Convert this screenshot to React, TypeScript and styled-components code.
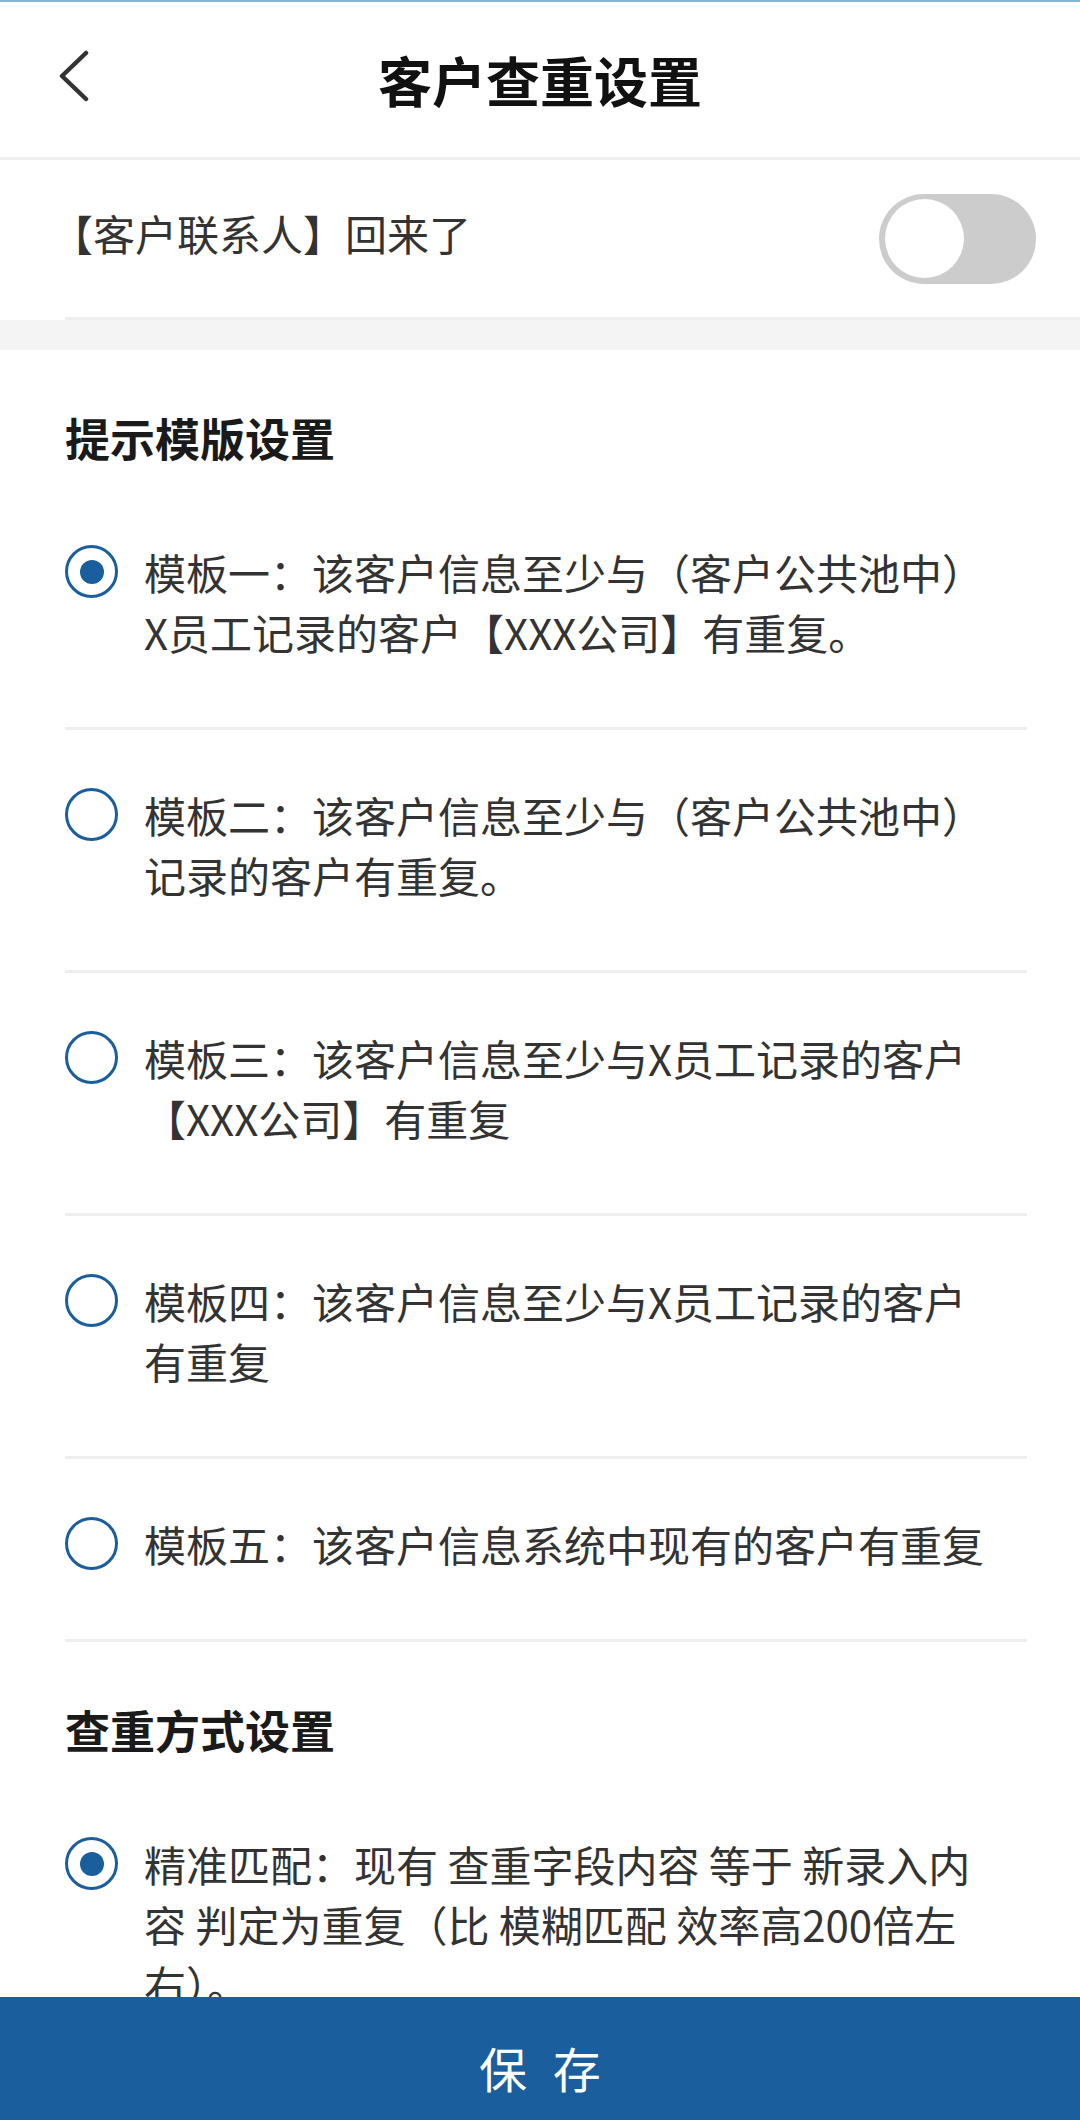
import React, { useState } from "react";
import styled, { createGlobalStyle } from "styled-components";

const GlobalStyle = createGlobalStyle`
  html, body {
    margin: 0;
    padding: 0;
    background: #ffffff;
  }
  body {
    font-family: "Noto Sans CJK SC", "Noto Sans", sans-serif;
    color: #333333;
  }
  *, *::before, *::after {
    box-sizing: border-box;
  }
`;

const Page = styled.div`
  height: 100vh;
  display: flex;
  flex-direction: column;
  overflow: hidden;
  background: #ffffff;
`;

const Header = styled.header`
  flex-shrink: 0;
  height: 160px;
  border-top: 2px solid #7ab8d4;
  border-bottom: 3px solid #eeeeee;
  display: grid;
  grid-template-columns: 1fr auto 1fr;
  align-items: center;
`;

const BackButton = styled.button`
  justify-self: start;
  display: flex;
  align-items: center;
  padding: 0 0 0 50px;
  margin: 0;
  border: none;
  background: transparent;
  cursor: pointer;
`;

const Title = styled.h1`
  margin: 0;
  font-size: 54px;
  font-weight: 700;
  line-height: 1;
  color: #111111;
`;

const Main = styled.main`
  flex: 1;
  min-height: 0;
  overflow: hidden;
`;

const ToggleRow = styled.div`
  margin-left: 65px;
  height: 160px;
  padding-right: 44px;
  border-bottom: 3px solid #eeeeee;
  display: flex;
  align-items: center;
  justify-content: space-between;
`;

const ToggleLabel = styled.span`
  margin-left: -14px;
  font-size: 42px;
  line-height: 60px;
  color: #333333;
  padding-bottom: 12px;
`;

const SwitchTrack = styled.button<{ $on: boolean }>`
  width: 157px;
  height: 90px;
  border-radius: 45px;
  border: none;
  padding: 0 6px;
  margin: 0;
  display: flex;
  align-items: center;
  justify-content: ${(p) => (p.$on ? "flex-end" : "flex-start")};
  background: ${(p) => (p.$on ? "#1a5e9e" : "#cccccc")};
  cursor: pointer;
  transition: background 0.2s;
`;

const SwitchKnob = styled.span`
  width: 79px;
  height: 79px;
  border-radius: 50%;
  background: #ffffff;
`;

const Band = styled.div`
  height: 30px;
  background: #f4f4f4;
`;

const Section = styled.section`
  padding: 58px 53px 0 65px;
`;

const SectionTitle = styled.h2`
  margin: 0 0 19px;
  font-size: 45px;
  font-weight: 700;
  line-height: 60px;
  color: #1a1a1a;
`;

const OptionList = styled.ul`
  list-style: none;
  margin: 0;
  padding: 0;
`;

const Option = styled.li`
  display: flex;
  align-items: flex-start;
  padding: 55px 0 65px;
  border-bottom: 3px solid #eeeeee;
  cursor: pointer;
`;

const RadioMark = styled.span<{ $checked: boolean }>`
  flex-shrink: 0;
  width: 53px;
  height: 53px;
  margin-top: 3px;
  border-radius: 50%;
  border: 3px solid #1a5e9e;
  display: flex;
  align-items: center;
  justify-content: center;

  &::after {
    content: "";
    width: 24px;
    height: 24px;
    border-radius: 50%;
    background: #1a5e9e;
    display: ${(p) => (p.$checked ? "block" : "none")};
  }
`;

const OptionText = styled.span`
  flex: 1;
  margin-left: 26px;
  padding-right: 28px;
  font-size: 42px;
  line-height: 60px;
  color: #333333;
`;

const Footer = styled.footer`
  flex-shrink: 0;
  height: 123px;
  overflow: hidden;
  background: #1a5e9e;
`;

const SaveButton = styled.button`
  display: block;
  width: 100%;
  height: 140px;
  margin: 0;
  padding: 0;
  border: none;
  background: #1a5e9e;
  color: #ffffff;
  font-family: "Noto Sans CJK SC", "Noto Sans", sans-serif;
  font-size: 48px;
  line-height: 140px;
  word-spacing: 15px;
  text-align: center;
  cursor: pointer;
`;

const BackIcon = () => (
  <svg width="48" height="60" viewBox="0 0 48 60" fill="none">
    <path
      d="M36 3 L12 26 L36 49"
      stroke="#333333"
      strokeWidth="4.5"
      strokeLinecap="round"
      strokeLinejoin="round"
    />
  </svg>
);

const templates = [
  "模板一：该客户信息至少与（客户公共池中）X员工记录的客户【XXX公司】有重复。",
  "模板二：该客户信息至少与（客户公共池中）记录的客户有重复。",
  "模板三：该客户信息至少与X员工记录的客户【XXX公司】有重复",
  "模板四：该客户信息至少与X员工记录的客户有重复",
  "模板五：该客户信息系统中现有的客户有重复",
];

const methods = [
  "精准匹配：现有 查重字段内容 等于 新录入内容 判定为重复（比 模糊匹配 效率高200倍左右）。",
];

export default function App() {
  const [contactOn, setContactOn] = useState(false);
  const [template, setTemplate] = useState(0);
  const [method, setMethod] = useState(0);

  return (
    <>
      <GlobalStyle />
      <Page>
        <Header>
          <BackButton aria-label="返回">
            <BackIcon />
          </BackButton>
          <Title>客户查重设置</Title>
          <span />
        </Header>
        <Main>
          <ToggleRow>
            <ToggleLabel>【客户联系人】回来了</ToggleLabel>
            <SwitchTrack
              role="switch"
              aria-checked={contactOn}
              $on={contactOn}
              onClick={() => setContactOn((v) => !v)}
            >
              <SwitchKnob />
            </SwitchTrack>
          </ToggleRow>
          <Band />
          <Section>
            <SectionTitle>提示模版设置</SectionTitle>
            <OptionList role="radiogroup">
              {templates.map((t, i) => (
                <Option
                  key={t}
                  role="radio"
                  aria-checked={template === i}
                  onClick={() => setTemplate(i)}
                >
                  <RadioMark $checked={template === i} />
                  <OptionText>{t}</OptionText>
                </Option>
              ))}
            </OptionList>
          </Section>
          <Section>
            <SectionTitle>查重方式设置</SectionTitle>
            <OptionList role="radiogroup">
              {methods.map((t, i) => (
                <Option
                  key={t}
                  role="radio"
                  aria-checked={method === i}
                  onClick={() => setMethod(i)}
                >
                  <RadioMark $checked={method === i} />
                  <OptionText>{t}</OptionText>
                </Option>
              ))}
            </OptionList>
          </Section>
        </Main>
        <Footer>
          <SaveButton>保 存</SaveButton>
        </Footer>
      </Page>
    </>
  );
}
